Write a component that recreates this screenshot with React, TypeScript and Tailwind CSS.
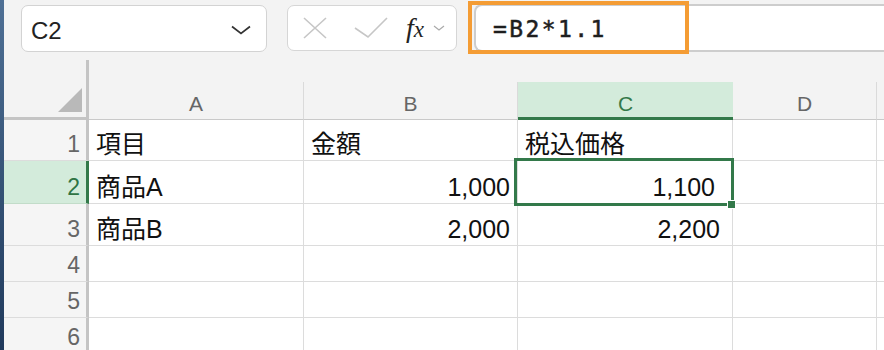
import type { ReactNode } from 'react';

const GREEN = '#33794a';

const COLS = [
  { key: 'A', w: 'w-[215px]' },
  { key: 'B', w: 'w-[214px]' },
  { key: 'C', w: 'w-[215px]' },
  { key: 'D', w: 'w-[144px]' },
];

type Row = { n: number; h: string; cells: ReactNode[] };

const ROWS: Row[] = [
  { n: 1, h: 'h-[41px]', cells: ['項目', '金額', '税込価格', ''] },
  { n: 2, h: 'h-[43px]', cells: ['商品A', '1,000', '1,100', ''] },
  { n: 3, h: 'h-[42px]', cells: ['商品B', '2,000', '2,200', ''] },
  { n: 4, h: 'h-[36px]', cells: ['', '', '', ''] },
  { n: 5, h: 'h-[36px]', cells: ['', '', '', ''] },
  { n: 6, h: 'h-[36px]', cells: ['', '', '', ''] },
];

// numbers sit on the right like Excel does
const RIGHT: Record<string, string> = {
  '1,000': 'justify-end pr-[7px]',
  '2,000': 'justify-end pr-[7px]',
  '1,100': 'justify-end pr-[17px]',
  '2,200': 'justify-end pr-[12px]',
};

function NameBox() {
  return (
    <div className="ml-[17px] w-[246px] h-[47px] flex items-center justify-between pl-[9px] pr-[15px] bg-white border-[1.5px] border-[#d3d3d3] rounded-[7px]">
      <span className="text-[24px] text-[#222] pt-[4px]">C2</span>
      <svg width="20" height="10" viewBox="0 0 20 10" className="mt-[3px]">
        <polyline points="1,1.5 10,8.5 19,1.5" fill="none" stroke="#333" strokeWidth="1.7" />
      </svg>
    </div>
  );
}

function ToolBox() {
  return (
    <div className="ml-[20px] w-[170px] h-[46px] flex items-center pl-[15px] bg-white border-[1.5px] border-[#d6d6d6] rounded-[7px]">
      <svg width="24" height="22" viewBox="0 0 24 22">
        <path d="M1 1 L23 21 M23 1 L1 21" stroke="#c6c6c6" strokeWidth="1.6" fill="none" />
      </svg>
      <svg width="34" height="22" viewBox="0 0 34 22" className="ml-[27px]">
        <polyline points="1,11 14,20 33,1" stroke="#c6c6c6" strokeWidth="1.6" fill="none" />
      </svg>
      <span className="ml-[18px] font-['Liberation_Serif'] italic text-[#222] leading-none">
        <span className="text-[28px]">f</span>
        <span className="text-[23px]">x</span>
      </span>
      <svg width="12" height="6" viewBox="0 0 12 6" className="ml-[9px]">
        <polyline points="1,1 6,5 11,1" stroke="#aaa" strokeWidth="1.2" fill="none" />
      </svg>
    </div>
  );
}

export default function App() {
  return (
    <div className="relative flex w-[884px] h-[350px] overflow-hidden bg-[#f3f3f3] font-['Liberation_Sans','Noto_Sans_CJK_JP',sans-serif]">
      <div className="w-[4px] shrink-0 bg-gradient-to-b from-[#4f7095] to-[#203a5c]" />

      <div className="flex-1 flex flex-col overflow-hidden">
        {/* formula bar */}
        <div className="h-[60px] shrink-0 flex items-start pt-[5px]">
          <NameBox />
          <ToolBox />
          <div className="ml-[17px] flex-1 h-[48px] -mt-[1px] flex items-center pl-[17px] bg-white border-y-2 border-l-2 border-[#cdcdcd] rounded-l-[8px]">
            <span className="font-['DejaVu_Sans_Mono',monospace] text-[23px] tracking-[2.4px] text-[#1e1e1e] pt-[2px] [-webkit-text-stroke:0.5px_#1e1e1e]">
              =B2*1.1
            </span>
          </div>
        </div>

        {/* column headers */}
        <div className="flex h-[60px] shrink-0">
          <div className="w-[85px] shrink-0 flex items-end justify-end pr-[4px] pb-[5px] border-r-[3px] border-b-[3px] border-[#c4c4c4]">
            <svg width="24" height="24" viewBox="0 0 24 24">
              <polygon points="0,24 24,24 24,0" fill="#b9b9b9" />
            </svg>
          </div>
          <div className="flex flex-col">
            <div className="h-[22px]" />
            <div className="flex h-[38px]">
              {COLS.map(c =>
                c.key === 'C' ? (
                  <div
                    key={c.key}
                    className={`${c.w} shrink-0 flex items-end justify-center pb-[3px] bg-[#d3ebdb] border-b-[3px] border-[#33794a] text-[21px] leading-none text-[#33794a]`}
                  >
                    {c.key}
                  </div>
                ) : (
                  <div
                    key={c.key}
                    className={`${c.w} shrink-0 flex items-end justify-center pb-[5px] border-r border-b border-r-[#dadada] border-b-[#c9c9c9] text-[21px] leading-none text-[#666]`}
                  >
                    {c.key}
                  </div>
                ),
              )}
              <div className="w-[20px] border-b border-[#c9c9c9]" />
            </div>
          </div>
        </div>

        {/* rows */}
        {ROWS.map(r => {
          const sel = r.n === 2;
          return (
            <div key={r.n} className={`flex ${r.h} shrink-0`}>
              <div
                className={`w-[85px] shrink-0 flex items-end justify-end pr-[6px] pb-[4px] border-r-[3px] border-b text-[23px] leading-none ${
                  sel
                    ? 'bg-[#d3ebdb] border-r-[#33794a] border-b-[#c2dcc9] text-[#2f7444]'
                    : 'bg-[#f5f5f5] border-r-[#c4c4c4] border-b-[#dcdcdc] text-[#666]'
                }`}
              >
                {r.n}
              </div>
              {COLS.map((c, i) => {
                const v = r.cells[i];
                const align = typeof v === 'string' && RIGHT[v] ? RIGHT[v] : 'pl-[7px]';
                return (
                  <div
                    key={c.key}
                    className={`${c.w} shrink-0 flex items-end pb-[3px] bg-white border-r border-b border-[#dcdcdc] text-[25px] leading-none text-[#111] ${align}`}
                  >
                    {v}
                  </div>
                );
              })}
              <div className="flex-1 bg-white border-b border-[#dcdcdc]" />
            </div>
          );
        })}
      </div>

      {/* highlight round the formula */}
      <div className="absolute left-[468px] top-[1px] w-[221px] h-[53px] border-4 border-[#f49c34]" />

      {/* active cell C2 */}
      <div
        className="absolute left-[514px] top-[158px] w-[220px] h-[48px] border-[3px]"
        style={{ borderColor: GREEN }}
      />
      <div className="absolute left-[727px] top-[200px] w-[9px] h-[9px] bg-[#33794a] border border-white" />
    </div>
  );
}
